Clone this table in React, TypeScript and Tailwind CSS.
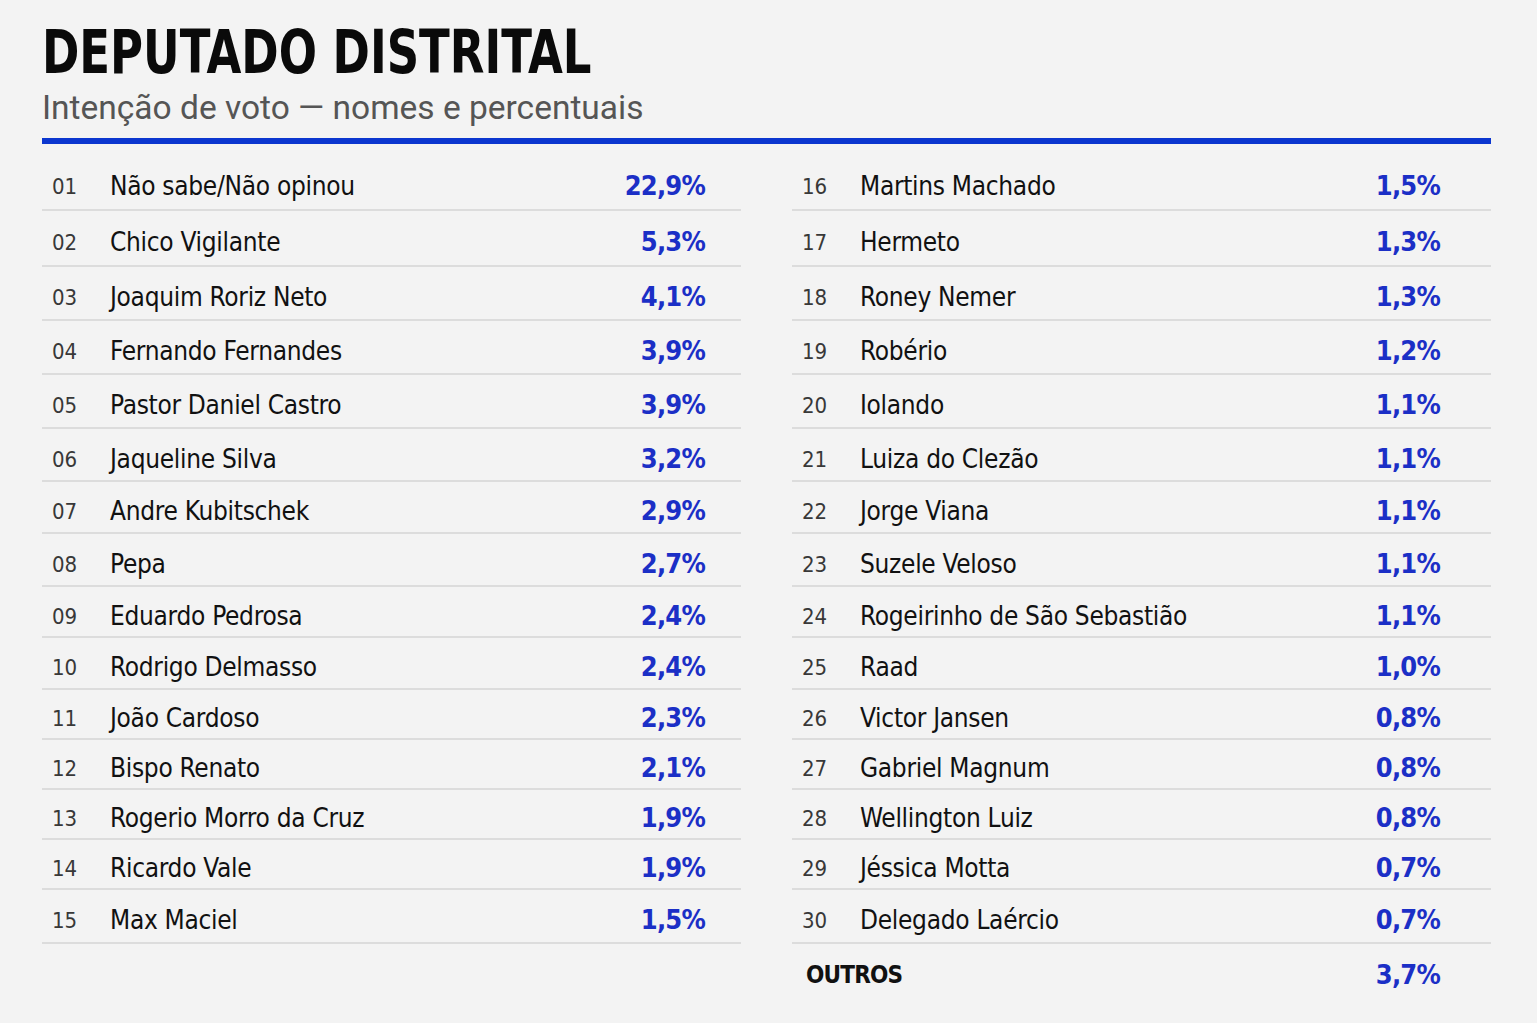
import React from "react";

type Row = { n: string; name: string; pct: string; h: string };

const left: Row[] = [
  { n: "01", name: "Não sabe/Não opinou", pct: "22,9%", h: "h-[56px]" },
  { n: "02", name: "Chico Vigilante", pct: "5,3%", h: "h-[56px]" },
  { n: "03", name: "Joaquim Roriz Neto", pct: "4,1%", h: "h-[54px]" },
  { n: "04", name: "Fernando Fernandes", pct: "3,9%", h: "h-[54px]" },
  { n: "05", name: "Pastor Daniel Castro", pct: "3,9%", h: "h-[54px]" },
  { n: "06", name: "Jaqueline Silva", pct: "3,2%", h: "h-[53px]" },
  { n: "07", name: "Andre Kubitschek", pct: "2,9%", h: "h-[52px]" },
  { n: "08", name: "Pepa", pct: "2,7%", h: "h-[53px]" },
  { n: "09", name: "Eduardo Pedrosa", pct: "2,4%", h: "h-[51px]" },
  { n: "10", name: "Rodrigo Delmasso", pct: "2,4%", h: "h-[52px]" },
  { n: "11", name: "João Cardoso", pct: "2,3%", h: "h-[50px]" },
  { n: "12", name: "Bispo Renato", pct: "2,1%", h: "h-[50px]" },
  { n: "13", name: "Rogerio Morro da Cruz", pct: "1,9%", h: "h-[50px]" },
  { n: "14", name: "Ricardo Vale", pct: "1,9%", h: "h-[50px]" },
  { n: "15", name: "Max Maciel", pct: "1,5%", h: "h-[54px]" },
];

const right: Row[] = [
  { n: "16", name: "Martins Machado", pct: "1,5%", h: "h-[56px]" },
  { n: "17", name: "Hermeto", pct: "1,3%", h: "h-[56px]" },
  { n: "18", name: "Roney Nemer", pct: "1,3%", h: "h-[54px]" },
  { n: "19", name: "Robério", pct: "1,2%", h: "h-[54px]" },
  { n: "20", name: "Iolando", pct: "1,1%", h: "h-[54px]" },
  { n: "21", name: "Luiza do Clezão", pct: "1,1%", h: "h-[53px]" },
  { n: "22", name: "Jorge Viana", pct: "1,1%", h: "h-[52px]" },
  { n: "23", name: "Suzele Veloso", pct: "1,1%", h: "h-[53px]" },
  { n: "24", name: "Rogeirinho de São Sebastião", pct: "1,1%", h: "h-[51px]" },
  { n: "25", name: "Raad", pct: "1,0%", h: "h-[52px]" },
  { n: "26", name: "Victor Jansen", pct: "0,8%", h: "h-[50px]" },
  { n: "27", name: "Gabriel Magnum", pct: "0,8%", h: "h-[50px]" },
  { n: "28", name: "Wellington Luiz", pct: "0,8%", h: "h-[50px]" },
  { n: "29", name: "Jéssica Motta", pct: "0,7%", h: "h-[50px]" },
  { n: "30", name: "Delegado Laércio", pct: "0,7%", h: "h-[54px]" },
];

const narrow = "font-['DejaVu_Sans_Condensed',sans-serif]";

function RowItem({ r, pr }: { r: Row; pr: string }) {
  return (
    <div className={`${r.h} flex items-center border-b-2 border-[#dcdcdc] pt-[9px]`}>
      <span className={`${narrow} w-[68px] pl-[10px] text-[22px] text-[#383838]`}>{r.n}</span>
      <span className={`${narrow} flex-1 text-[26px] tracking-[-0.3px] text-[#111111]`}>{r.name}</span>
      <span className={`${narrow} ${pr} text-[27px] font-bold tracking-[-0.8px] text-[#1b2fc6]`}>{r.pct}</span>
    </div>
  );
}

export default function App() {
  return (
    <div className="min-h-[1023px] w-full bg-[#f3f3f3] pl-[42px] pr-[46px] pt-[18px]">
      <h1
        className={`${narrow} inline-block origin-left scale-x-[0.82] whitespace-nowrap text-[61px] font-bold leading-[68px] text-[#0a0a0a]`}
      >
        DEPUTADO DISTRITAL
      </h1>
      <p className="mt-[3px] font-['Roboto',sans-serif] text-[33.5px] leading-[38px] text-[#555555]">
        Intenção de voto — nomes e percentuais
      </p>
      <div className="mt-[11px] h-[6px] bg-[#0b36cf]" />
      <div className="mt-[11px] grid grid-cols-2 gap-x-[51px]">
        <div className="flex flex-col">
          {left.map((r) => (
            <RowItem key={r.n} r={r} pr="pr-[36px]" />
          ))}
        </div>
        <div className="flex flex-col">
          {right.map((r) => (
            <RowItem key={r.n} r={r} pr="pr-[51px]" />
          ))}
          <div className="flex h-[62px] items-center">
            <span className={`${narrow} flex-1 pl-[14px] text-[24px] font-bold tracking-[-0.8px] text-[#111111]`}>OUTROS</span>
            <span className={`${narrow} pr-[51px] text-[27px] font-bold tracking-[-0.8px] text-[#1b2fc6]`}>3,7%</span>
          </div>
        </div>
      </div>
    </div>
  );
}
